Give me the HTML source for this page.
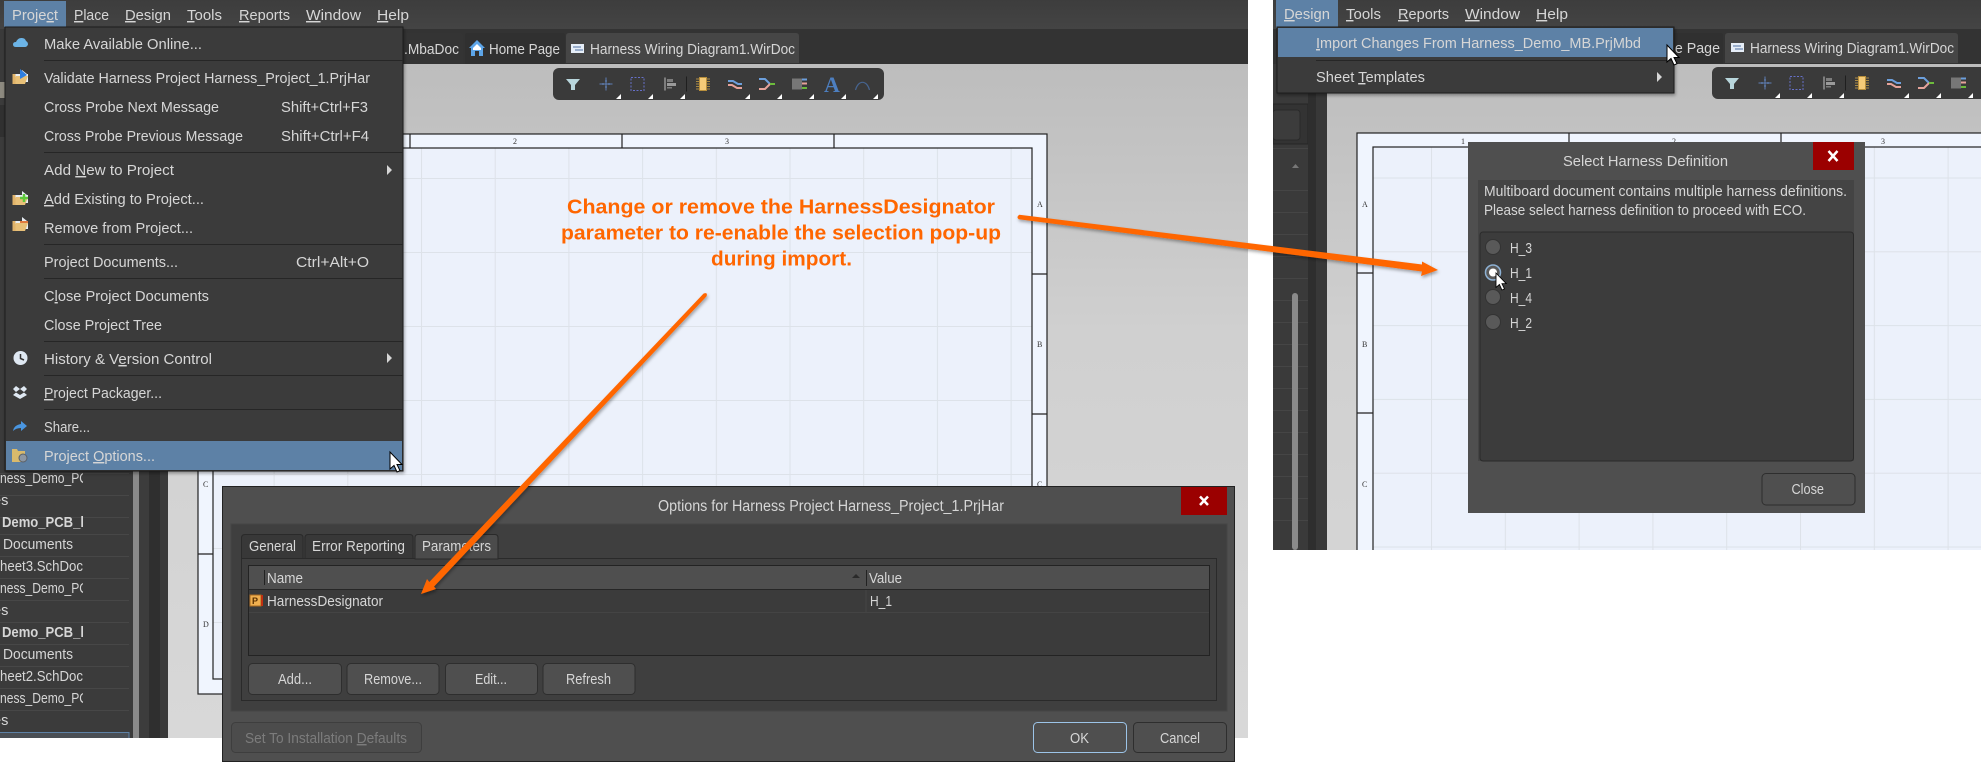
<!DOCTYPE html>
<html><head><meta charset="utf-8"><title>Harness</title>
<style>
html,body{margin:0;padding:0;background:#fff;width:1981px;height:762px;overflow:hidden}
svg{display:block}
text{font-family:"Liberation Sans",sans-serif;font-size:14.5px;fill:#d6d6d6}
.b{font-weight:bold}
.dis{fill:#7c7c7c}
.o{font-weight:bold;font-size:20.5px;fill:#ff6600}
.sm{font-family:"Liberation Serif",serif;font-size:8px;fill:#333}
.sep{stroke:#262626;stroke-width:1}
.btn{fill:#4f4f4f;stroke:#2e2e2e;stroke-width:1}
</style></head><body>
<svg width="1981" height="762" viewBox="0 0 1981 762" xmlns="http://www.w3.org/2000/svg">
<defs>
<linearGradient id="cv" gradientUnits="userSpaceOnUse" x1="0" y1="64" x2="0" y2="738"><stop offset="0" stop-color="#bdbdbd"/><stop offset=".15" stop-color="#c4c4c4"/><stop offset=".4" stop-color="#d0d0d0"/><stop offset="1" stop-color="#d8d8d8"/></linearGradient>
<linearGradient id="bar" x1="0" y1="0" x2="0" y2="1"><stop offset="0" stop-color="#3d3d3d"/><stop offset="1" stop-color="#444"/></linearGradient>
<pattern id="g1" patternUnits="userSpaceOnUse" x="421" y="178" width="73.7" height="74"><rect width="73.7" height="74" fill="#ecf1fb"/><rect width="1" height="74" fill="#dde2e9"/><rect width="73.7" height="1" fill="#dde2e9"/></pattern>
<pattern id="g2" patternUnits="userSpaceOnUse" x="1431" y="177.5" width="73.8" height="73.8"><rect width="73.8" height="73.8" fill="#ecf1fb"/><rect width="1" height="73.8" fill="#dde2e9"/><rect width="73.8" height="1" fill="#dde2e9"/></pattern>
<filter id="sh" x="-10%" y="-30%" width="120%" height="160%"><feDropShadow dx="1" dy="2" stdDeviation="1.5" flood-color="#000" flood-opacity=".35"/></filter>
<clipPath id="cl"><rect x="0" y="0" width="1248" height="738"/></clipPath>
<clipPath id="cr"><rect x="1273" y="0" width="708" height="550"/></clipPath>
<clipPath id="cp"><rect x="0" y="470" width="83" height="268"/></clipPath>
<g id="cur"><path d="M0 0V17L4 13.5L7 20L10 18.7L7 12.5H12Z" fill="#fff" stroke="#000" stroke-width="1"/></g>
<g id="tools">
<path d="M-7-5H7L2 1V6L-2 6V1Z" fill="#b8d6dc"/>
<g transform="translate(33 0)" stroke="#5f7fb5" stroke-width="1" fill="none"><path d="M-6.500 0H6.500M0-6.500V6.500M-3-1V1M3-1V1M-1-3H1M-1 3H1"/></g>
<rect x="58" y="-6.500" width="13" height="13" fill="none" stroke="#6670c8" stroke-width="1" stroke-dasharray="2 1.500"/>
<g transform="translate(97 0)"><rect x="-6" y="-6.500" width="2" height="13" fill="#7d7d7d"/><rect x="-3" y="-5" width="6" height="3" fill="#7d7d7d"/><rect x="-3" y="-1" width="9" height="3" fill="#9a9a9a"/><rect x="-3" y="3" width="5" height="1.500" fill="#7d7d7d"/></g>
<rect x="113" y="-7.500" width="1" height="15" fill="#1f1f1f"/>
<g transform="translate(130 0)"><rect x="-3.500" y="-6.500" width="7" height="13" fill="#f5cb78" stroke="#b88f3c"/><path d="M-7-5H-4M-7-2.500H-4M-7 0H-4M-7 2.500H-4M-7 5H-4M4-5H7M4-2.500H7M4 0H7M4 2.500H7M4 5H7" stroke="#a98a45"/></g>
<g transform="translate(162 0)" fill="none" stroke-width="2"><path d="M-7-3H-2L3-0H7" stroke="#6c9fdc"/><path d="M-7 1H-3L2 4H7" stroke="#e6a39a"/></g>
<g transform="translate(194 0)" fill="none" stroke-width="2"><path d="M-8-5H-2L3 0" stroke="#6c9fdc"/><path d="M3 0L-2 5H-8" stroke="#e6a39a"/><path d="M3 0H8" stroke="#6cbb3c"/></g>
<g transform="translate(226 0)"><rect x="-7" y="-5.500" width="10" height="11" fill="#777"/><rect x="3" y="-5.500" width="5" height="2" fill="#6c9fdc"/><rect x="3" y="-1.500" width="5" height="2" fill="#e6a39a"/><rect x="3" y="3" width="5" height="2" fill="#6cbb3c"/></g>
</g>
<g id="tri"><path d="M0 0H-5L0-5Z" fill="#fff"/></g>
</defs>

<!-- ================= LEFT SCREENSHOT ================= -->
<g clip-path="url(#cl)">
<rect x="0" y="0" width="1248" height="738" fill="url(#cv)"/>
<rect x="0" y="0" width="1248" height="29" fill="url(#bar)"/>
<rect x="0" y="29" width="1248" height="35" fill="#333"/>
<!-- side panel -->
<rect x="0" y="64" width="133" height="674" fill="#3b3b3b"/>
<rect x="0" y="29" width="8" height="60" fill="#3a3a3a"/>
<rect x="0" y="82" width="5" height="16" fill="#8d8a80"/>
<rect x="0" y="105" width="5" height="32" fill="#303030"/>
<g stroke="#474747"><path d="M0 473.500H129M0 495.500H129M0 517.500H129M0 534.500H129M0 556.500H129M0 578.500H129M0 600.500H129M0 622.500H129M0 644.500H129M0 666.500H129M0 688.500H129M0 710.500H129"/></g>
<rect x="133" y="64" width="6" height="674" fill="#8a8a8a"/>
<rect x="139" y="64" width="10" height="674" fill="#3c3c3c"/>
<rect x="149" y="64" width="11" height="674" fill="#2f2f2f"/>
<rect x="160" y="64" width="8" height="674" fill="#3a3a3a"/>
<g clip-path="url(#cp)">
<text x="0" y="483" textLength="88" lengthAdjust="spacingAndGlyphs">ness_Demo_PC</text>
<text x="-7" y="505">es</text>
<text class="b" x="2" y="527" textLength="82" lengthAdjust="spacingAndGlyphs">Demo_PCB_l</text>
<text x="3" y="549" textLength="70" lengthAdjust="spacingAndGlyphs">Documents</text>
<text x="0" y="571" textLength="83" lengthAdjust="spacingAndGlyphs">heet3.SchDoc</text>
<text x="0" y="593" textLength="88" lengthAdjust="spacingAndGlyphs">ness_Demo_PC</text>
<text x="-7" y="615">es</text>
<text class="b" x="2" y="637" textLength="82" lengthAdjust="spacingAndGlyphs">Demo_PCB_l</text>
<text x="3" y="659" textLength="70" lengthAdjust="spacingAndGlyphs">Documents</text>
<text x="0" y="681" textLength="83" lengthAdjust="spacingAndGlyphs">heet2.SchDoc</text>
<text x="0" y="703" textLength="88" lengthAdjust="spacingAndGlyphs">ness_Demo_PC</text>
<text x="-7" y="725">es</text>
</g>
<rect x="-2" y="732.500" width="131" height="10" fill="#4a4f55" stroke="#5d81a6"/>

<!-- sheet -->
<rect x="198" y="134" width="849" height="560" fill="#f0f5fe" stroke="#222" stroke-width="1.200"/>
<rect x="213" y="148" width="819" height="531" fill="url(#g1)" stroke="#222" stroke-width="1.200"/>
<path d="M410 134V148M622 134V148M834 134V148M198 274H213M198 414H213M198 554H213M1032 274H1047M1032 414H1047M1032 554H1047" stroke="#222" stroke-width="1.200"/>
<text class="sm" x="513" y="144">2</text><text class="sm" x="725" y="144">3</text>
<text class="sm" x="1037" y="207">A</text><text class="sm" x="1037" y="347">B</text><text class="sm" x="1037" y="487">C</text>
<text class="sm" x="203" y="487">C</text><text class="sm" x="203" y="627">D</text>

<!-- menu bar -->
<rect x="4" y="1" width="62" height="26" fill="#5d81a6"/>
<text x="12" y="20" textLength="46" lengthAdjust="spacingAndGlyphs" fill="#e8e8e8">Proje<tspan text-decoration="underline">c</tspan>t</text>
<text x="74" y="20" textLength="35" lengthAdjust="spacingAndGlyphs"><tspan text-decoration="underline">P</tspan>lace</text>
<text x="125" y="20" textLength="46" lengthAdjust="spacingAndGlyphs"><tspan text-decoration="underline">D</tspan>esign</text>
<text x="187" y="20" textLength="35" lengthAdjust="spacingAndGlyphs"><tspan text-decoration="underline">T</tspan>ools</text>
<text x="239" y="20" textLength="51" lengthAdjust="spacingAndGlyphs"><tspan text-decoration="underline">R</tspan>eports</text>
<text x="306" y="20" textLength="55" lengthAdjust="spacingAndGlyphs"><tspan text-decoration="underline">W</tspan>indow</text>
<text x="377" y="20" textLength="32" lengthAdjust="spacingAndGlyphs"><tspan text-decoration="underline">H</tspan>elp</text>

<!-- doc tabs -->
<path d="M403 64V33H460Q463 33 463 36V64Z" fill="#343434"/>
<path d="M465 64V36Q465 33 468 33H562Q565 33 565 36V64Z" fill="#303030"/>
<path d="M566 63V36Q566 33 569 33H796Q799 33 799 36V63Z" fill="#464646"/>
<text x="404" y="54" textLength="55" lengthAdjust="spacingAndGlyphs">.MbaDoc</text>
<path d="M469 48L477 40L485 48H483V56H479V51H475V56H471V48Z" fill="#5da5e8"/><path d="M473 48L477 44L481 48V50H473Z" fill="#fff"/>
<text x="489" y="54" textLength="71" lengthAdjust="spacingAndGlyphs">Home Page</text>
<rect x="571" y="44" width="13" height="9" fill="#e6eef8"/><path d="M573 47H581M575 50H583" stroke="#4e6fa0"/>
<text x="590" y="54" textLength="205" lengthAdjust="spacingAndGlyphs" fill="#e2e2e2">Harness Wiring Diagram1.WirDoc</text>

<!-- toolbar -->
<rect x="553" y="68" width="331" height="32" rx="6" fill="#3a3a3a"/>
<use href="#tools" transform="translate(573 84)"/>
<text x="824" y="92" style="font-family:'Liberation Serif',serif;font-size:22px;font-weight:bold;fill:#4d7fc0">A</text>
<path d="M855.500 90A7.500 12 0 0 1 869.500 90" fill="none" stroke="#46648f" stroke-width="1.200"/>
<use href="#tri" x="621" y="99"/><use href="#tri" x="653" y="99"/><use href="#tri" x="685" y="99"/><use href="#tri" x="750" y="99"/><use href="#tri" x="782" y="99"/><use href="#tri" x="814" y="99"/><use href="#tri" x="846" y="99"/><use href="#tri" x="878" y="99"/>

<!-- project menu -->
<g filter="url(#sh)"><rect x="5" y="27" width="398" height="444" fill="#3a3a3a" stroke="#1e1e1e"/></g>
<path class="sep" d="M44 60.500H403M44 152.500H403M44 244.500H403M44 278.500H403M44 341.500H403M44 375.500H403M44 409.500H403"/>
<rect x="6" y="441" width="396" height="29" fill="#5d81a6"/>

<text x="44" y="49" textLength="158" lengthAdjust="spacingAndGlyphs">Make Available Online...</text>
<text x="44" y="83" textLength="326" lengthAdjust="spacingAndGlyphs">Validate Harness Project Harness_Project_1.PrjHar</text>
<text x="44" y="112" textLength="175" lengthAdjust="spacingAndGlyphs">Cross Probe Next Message</text>
<text x="281" y="112" textLength="87" lengthAdjust="spacingAndGlyphs">Shift+Ctrl+F3</text>
<text x="44" y="141" textLength="199" lengthAdjust="spacingAndGlyphs">Cross Probe Previous Message</text>
<text x="281" y="141" textLength="88" lengthAdjust="spacingAndGlyphs">Shift+Ctrl+F4</text>
<text x="44" y="175" textLength="130" lengthAdjust="spacingAndGlyphs">Add <tspan text-decoration="underline">N</tspan>ew to Project</text>
<text x="44" y="204" textLength="160" lengthAdjust="spacingAndGlyphs"><tspan text-decoration="underline">A</tspan>dd Existing to Project...</text>
<text x="44" y="233" textLength="149" lengthAdjust="spacingAndGlyphs">Remove from Project...</text>
<text x="44" y="267" textLength="134" lengthAdjust="spacingAndGlyphs">Project Documents...</text>
<text x="296" y="267" textLength="73" lengthAdjust="spacingAndGlyphs">Ctrl+Alt+O</text>
<text x="44" y="301" textLength="165" lengthAdjust="spacingAndGlyphs">C<tspan text-decoration="underline">l</tspan>ose Project Documents</text>
<text x="44" y="330" textLength="118" lengthAdjust="spacingAndGlyphs">Close Project Tree</text>
<text x="44" y="364" textLength="168" lengthAdjust="spacingAndGlyphs">History &amp; V<tspan text-decoration="underline">e</tspan>rsion Control</text>
<text x="44" y="398" textLength="118" lengthAdjust="spacingAndGlyphs"><tspan text-decoration="underline">P</tspan>roject Packager...</text>
<text x="44" y="432" textLength="46" lengthAdjust="spacingAndGlyphs">Share...</text>
<text x="44" y="461" textLength="111" lengthAdjust="spacingAndGlyphs" fill="#eee">Project <tspan text-decoration="underline">O</tspan>ptions...</text>
<path d="M387 165L392 170L387 175ZM387 353L392 358L387 363Z" fill="#d6d6d6"/>

<!-- menu icons -->
<path d="M16 47Q13 47 13 44.500Q13 42 16 42Q18 37.500 22 38Q25 38 26 41Q28 42 28 44.500Q27 47 25 47Z" fill="#6cb4e6"/>
<g id="folder"><path d="M13 74H22V70L27 74H28V82H13Z" fill="#e8eef4"/><path d="M13 84L16 76H28L25 84Z" fill="#e8c078"/><rect x="12.500" y="74" width="3" height="10" fill="#e0b36a"/></g>
<path d="M20 69V79L27 75Z" fill="#2f7fe0"/>
<use href="#folder" y="121"/><path d="M20 198H28M24 194V202" stroke="#5ec83c" stroke-width="2.500"/>
<use href="#folder" y="147"/><path d="M20 222H28" stroke="#e07b40" stroke-width="2"/>
<circle cx="20.500" cy="358" r="7" fill="#dfe8f2"/><path d="M20.500 354V358.500L24 360" fill="none" stroke="#333" stroke-width="1.500"/>
<path d="M16 386L20 389L16 392L13 389ZM24 386L27 389L24 392L20 389ZM16 392.500L20 395L24 392.500L27 395L20 399L13 395Z" fill="#dfe8f2"/>
<path d="M13 431Q14 425 21 424V421L27 426L21 431V428Q16 428 13 431Z" fill="#4a96e0"/>
<path d="M12 449H17L18 451H25V462H12Z" fill="#d9ba6c"/><circle cx="23" cy="458" r="4" fill="#8d97a3" stroke="#5a5f66"/>
<use href="#cur" x="390" y="452"/>
</g>

<!-- ================= OPTIONS DIALOG ================= -->
<rect x="222.500" y="486.500" width="1012" height="275" fill="#4f4f4f" stroke="#222"/>
<rect x="1181" y="487" width="46" height="28" fill="#9b0000"/>
<path d="M1200 496.500L1208 505M1208 496.500L1200 505" stroke="#fff" stroke-width="2.500"/>
<text x="658" y="511" textLength="346" lengthAdjust="spacingAndGlyphs" fill="#e4e4e4" style="font-size:15.500px">Options for Harness Project Harness_Project_1.PrjHar</text>
<rect x="231" y="524" width="996" height="187" fill="#3f3f3f" stroke="#454545"/>
<rect x="241.500" y="558.500" width="975" height="142" fill="#3f3f3f" stroke="#2a2a2a"/>
<path d="M241.500 558.500V538Q241.500 534.500 245 534.500H300Q303 534.500 303 538V558.500Z" fill="#383838" stroke="#2a2a2a"/>
<path d="M305 558.500V538Q305 534.500 308 534.500H410Q413 534.500 413 538V558.500Z" fill="#383838" stroke="#2a2a2a"/>
<path d="M415 559V538Q415 534.500 418 534.500H495Q498 534.500 498 538V559Z" fill="#4b4b4b" stroke="#2a2a2a"/>
<text x="249" y="551" textLength="47" lengthAdjust="spacingAndGlyphs">General</text>
<text x="312" y="551" textLength="93" lengthAdjust="spacingAndGlyphs">Error Reporting</text>
<text x="422" y="551" textLength="69" lengthAdjust="spacingAndGlyphs" fill="#e2e2e2">Parameters</text>

<rect x="248.500" y="565.500" width="961" height="90" fill="#3b3b3b" stroke="#232323"/>
<rect x="249" y="566" width="960" height="23" fill="#4f4f4f"/>
<path d="M249 589.500H1209" stroke="#262626"/>
<path d="M249 612.500H1209M866 590V612" stroke="#444"/>
<path d="M264.500 570V585M866.500 570V586" stroke="#222"/>
<path d="M852 578L856 574L860 578Z" fill="#2a2a2a"/>
<text x="267" y="583" textLength="36" lengthAdjust="spacingAndGlyphs">Name</text>
<text x="869" y="583" textLength="33" lengthAdjust="spacingAndGlyphs">Value</text>
<rect x="250" y="595" width="11" height="11" fill="#f0b050" stroke="#a86a20"/><rect x="261" y="595" width="2" height="11" fill="#c03010"/>
<text x="252" y="604" style="font-size:9px;fill:#5a3000" font-weight="bold">P</text>
<text x="267" y="606" textLength="116" lengthAdjust="spacingAndGlyphs">HarnessDesignator</text>
<text x="870" y="606" textLength="22" lengthAdjust="spacingAndGlyphs">H_1</text>

<rect class="btn" x="248.500" y="663.500" width="93" height="31" rx="4"/>
<rect class="btn" x="347" y="663.500" width="92" height="31" rx="4"/>
<rect class="btn" x="445.500" y="663.500" width="92" height="31" rx="4"/>
<rect class="btn" x="543" y="663.500" width="92" height="31" rx="4"/>
<text x="278" y="684" textLength="34" lengthAdjust="spacingAndGlyphs" fill="#e4e4e4">Add...</text>
<text x="364" y="684" textLength="58" lengthAdjust="spacingAndGlyphs" fill="#e4e4e4">Remove...</text>
<text x="475" y="684" textLength="32" lengthAdjust="spacingAndGlyphs" fill="#e4e4e4">Edit...</text>
<text x="566" y="684" textLength="45" lengthAdjust="spacingAndGlyphs" fill="#e4e4e4">Refresh</text>
<rect x="231.500" y="722.500" width="190" height="30" rx="4" fill="#4c4c4c" stroke="#3e3e3e"/>
<text class="dis" x="245" y="743" textLength="162" lengthAdjust="spacingAndGlyphs">Set To Installation <tspan text-decoration="underline">D</tspan>efaults</text>
<rect x="1033.500" y="722.500" width="93" height="30" rx="4" fill="#4f4f4f" stroke="#9cc4e8"/>
<rect x="1133.500" y="722.500" width="93" height="30" rx="4" class="btn"/>
<text x="1070" y="743" textLength="19" lengthAdjust="spacingAndGlyphs" fill="#e8e8e8">OK</text>
<text x="1160" y="743" textLength="40" lengthAdjust="spacingAndGlyphs" fill="#e0e0e0">Cancel</text>

<!-- ================= RIGHT SCREENSHOT ================= -->
<g clip-path="url(#cr)">
<rect x="1273" y="0" width="708" height="550" fill="url(#cv)"/>
<rect x="1273" y="0" width="708" height="29" fill="url(#bar)"/>
<rect x="1273" y="29" width="708" height="35" fill="#333"/>
<!-- side -->
<rect x="1273" y="64" width="35" height="486" fill="#3a3a3a"/>
<rect x="1273" y="104" width="35" height="40" fill="#333" stroke="#262626"/>
<rect x="1273" y="110" width="27" height="30" rx="3" fill="#3c3c3c" stroke="#2a2a2a"/>
<path d="M1273 148.500H1308M1273 190.500H1308M1273 212.500H1308M1273 234.500H1308M1273 256.500H1308M1273 278.500H1308M1273 300.500H1308M1273 322.500H1308M1273 344.500H1308M1273 366.500H1308M1273 388.500H1308M1273 410.500H1308M1273 432.500H1308M1273 454.500H1308M1273 476.500H1308M1273 498.500H1308M1273 520.500H1308" stroke="#454545"/>
<path d="M1292 168L1295.500 164L1299 168Z" fill="#777"/>
<rect x="1292" y="293" width="6" height="257" rx="3" fill="#8a8a8a"/>
<rect x="1308" y="64" width="8" height="486" fill="#2e2e2e"/>
<rect x="1316" y="64" width="11" height="486" fill="#383838"/>
<!-- sheet -->
<rect x="1357" y="133" width="700" height="500" fill="#f0f5fe" stroke="#222" stroke-width="1.200"/>
<rect x="1373" y="147" width="700" height="500" fill="url(#g2)" stroke="#222" stroke-width="1.200"/>
<path d="M1569 133V147M1781 133V147M1357 273H1373M1357 413H1373" stroke="#222" stroke-width="1.200"/>
<text class="sm" x="1461" y="144">1</text><text class="sm" x="1672" y="144">2</text><text class="sm" x="1881" y="144">3</text>
<text class="sm" x="1362" y="207">A</text><text class="sm" x="1362" y="347">B</text><text class="sm" x="1362" y="487">C</text>
<!-- menubar -->
<rect x="1276" y="0" width="62" height="28" fill="#5d81a6"/>
<text x="1284" y="19" textLength="46" lengthAdjust="spacingAndGlyphs" fill="#e8e8e8"><tspan text-decoration="underline">D</tspan>esign</text>
<text x="1346" y="19" textLength="35" lengthAdjust="spacingAndGlyphs"><tspan text-decoration="underline">T</tspan>ools</text>
<text x="1398" y="19" textLength="51" lengthAdjust="spacingAndGlyphs"><tspan text-decoration="underline">R</tspan>eports</text>
<text x="1465" y="19" textLength="55" lengthAdjust="spacingAndGlyphs"><tspan text-decoration="underline">W</tspan>indow</text>
<text x="1536" y="19" textLength="32" lengthAdjust="spacingAndGlyphs"><tspan text-decoration="underline">H</tspan>elp</text>
<!-- tabs -->
<path d="M1640 64V33H1720Q1723 33 1723 36V64Z" fill="#303030"/>
<path d="M1725 63V36Q1725 33 1728 33H1955Q1958 33 1958 36V63Z" fill="#464646"/>
<text x="1667" y="53" textLength="53" lengthAdjust="spacingAndGlyphs">ne Page</text>
<rect x="1731" y="43" width="13" height="9" fill="#e6eef8"/><path d="M1733 46H1741M1735 49H1743" stroke="#4e6fa0"/>
<text x="1750" y="53" textLength="204" lengthAdjust="spacingAndGlyphs" fill="#e2e2e2">Harness Wiring Diagram1.WirDoc</text>
<!-- toolbar -->
<rect x="1712" y="67" width="300" height="32" rx="6" fill="#3a3a3a"/>
<use href="#tools" transform="translate(1732 83)"/>
<use href="#tri" x="1780" y="98"/><use href="#tri" x="1812" y="98"/><use href="#tri" x="1844" y="98"/><use href="#tri" x="1909" y="98"/><use href="#tri" x="1941" y="98"/><use href="#tri" x="1973" y="98"/>
<!-- menu -->
<g filter="url(#sh)"><rect x="1277" y="27" width="397" height="66" fill="#3a3a3a" stroke="#1e1e1e"/></g>
<rect x="1278" y="28" width="395" height="29" fill="#5d81a6"/>
<path class="sep" d="M1316 60.500H1674"/>
<text x="1316" y="48" textLength="325" lengthAdjust="spacingAndGlyphs" fill="#e8e8e8"><tspan text-decoration="underline">I</tspan>mport Changes From Harness_Demo_MB.PrjMbd</text>
<text x="1316" y="82" textLength="109" lengthAdjust="spacingAndGlyphs">Sheet <tspan text-decoration="underline">T</tspan>emplates</text>
<path d="M1657 72L1662 77L1657 82Z" fill="#d6d6d6"/>
<use href="#cur" x="1667" y="45"/>
<!-- dialog -->
<rect x="1468" y="142" width="397" height="371" fill="#4f4f4f"/>
<rect x="1813" y="142" width="41" height="28" fill="#9b0000"/>
<path d="M1828.500 151L1837.500 161M1837.500 151L1828.500 161" stroke="#fff" stroke-width="2.500"/>
<text x="1563" y="166" textLength="165" lengthAdjust="spacingAndGlyphs" fill="#dedede">Select Harness Definition</text>
<rect x="1478" y="180" width="376" height="281" fill="#444"/>
<text x="1484" y="196" textLength="363" lengthAdjust="spacingAndGlyphs" fill="#cfd6dc">Multiboard document contains multiple harness definitions.</text>
<text x="1484" y="215" textLength="322" lengthAdjust="spacingAndGlyphs" fill="#cfd6dc">Please select harness definition to proceed with ECO.</text>
<rect x="1480" y="232" width="373.500" height="229" rx="3" fill="#3c3c3c" stroke="#2a2a2a"/>
<circle cx="1493" cy="247" r="7.500" fill="#595959" stroke="#333"/>
<circle cx="1493" cy="272.500" r="7.500" fill="#595959" stroke="#8db1d4" stroke-width="1.500"/><circle cx="1493" cy="272.500" r="4" fill="#fff"/>
<circle cx="1493" cy="297" r="7.500" fill="#595959" stroke="#333"/>
<circle cx="1493" cy="322" r="7.500" fill="#595959" stroke="#333"/>
<text x="1510" y="253" textLength="22" lengthAdjust="spacingAndGlyphs" fill="#e0c8a8">H_3</text>
<text x="1510" y="278" textLength="22" lengthAdjust="spacingAndGlyphs" fill="#dcdcc8">H_1</text>
<text x="1510" y="303" textLength="22" lengthAdjust="spacingAndGlyphs" fill="#e0c8a8">H_4</text>
<text x="1510" y="328" textLength="22" lengthAdjust="spacingAndGlyphs" fill="#e0c8a8">H_2</text>
<g transform="translate(1496 273) scale(.85)"><use href="#cur"/></g>
<rect x="1762" y="473.500" width="93" height="31.500" rx="4" class="btn"/>
<text x="1791.500" y="494" textLength="32.500" lengthAdjust="spacingAndGlyphs" fill="#eee">Close</text>
</g>

<!-- ================= ANNOTATION ================= -->
<text class="o" x="567" y="213.500" textLength="428" lengthAdjust="spacingAndGlyphs">Change or remove the HarnessDesignator</text>
<text class="o" x="561" y="239.500" textLength="440" lengthAdjust="spacingAndGlyphs">parameter to re-enable the selection pop-up</text>
<text class="o" x="711" y="265.500" textLength="141" lengthAdjust="spacingAndGlyphs">during import.</text>
<g filter="url(#sh)">
<path d="M1019.300 214.800L1422 264.500L1422 261.500L1438 270L1421 276L1422 271.500L1018.700 219.200Q1016 217 1019.300 214.800Z" fill="#ff6600"/>
<path d="M703.500 293.600L429.300 582L427 579L421 594L436 589L434 586.600L706.500 296.400Q708 292 703.500 293.600Z" fill="#ff6600"/>
</g>
</svg>
</body></html>
